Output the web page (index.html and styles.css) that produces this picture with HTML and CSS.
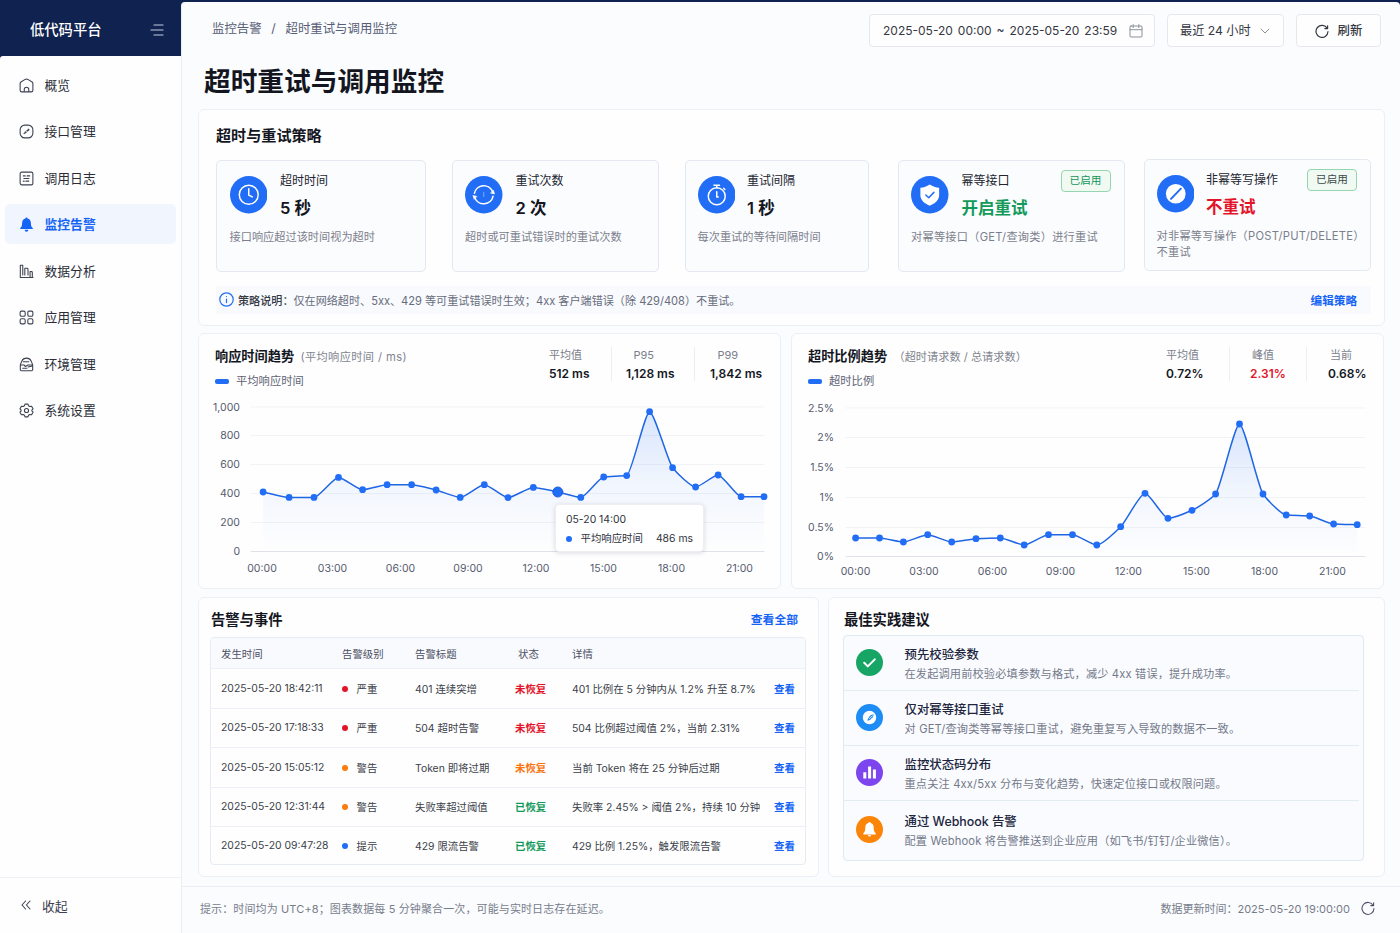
FILE: index.html
```html
<!DOCTYPE html>
<html lang="zh-CN">
<head>
    <meta charset="UTF-8">
    <title>超时重试与调用监控</title>
    <link rel="stylesheet" href="styles.css">
</head>
<body>
<aside class="sidebar">
    <div class="brand">
        <span>低代码平台</span>
        <svg class="brand-toggle" width="14" height="14" viewBox="0 0 14 14"><path d="M4 2h9M1 7h12M4 12h9"/></svg>
    </div>
    <nav class="menu">
        <a class="menu-item">
            <svg viewBox="0 0 16 16"><path d="M1.200 5.800Q1.200 4.800 2 4.300L6.600 1.500Q8 .8 9.400 1.500L14 4.300Q14.800 4.800 14.800 5.800V13a1.800 1.800 0 0 1-1.800 1.800H3A1.800 1.800 0 0 1 1.200 13zM5.600 14.800v-2.600a2.400 2.400 0 0 1 4.800 0v2.600"/></svg>
            概览
        </a>
        <a class="menu-item">
            <svg viewBox="0 0 16 16"><rect x="1.2" y="1.2" width="13.6" height="13.6" rx="5"/><path d="M5.400 10.200 7.600 8.800M10.600 5.800 8.400 7.200M8.400 7.200l1 .2M7.600 8.800l-1-.4M9.800 5.600l.8.200-.2.800"/></svg>
            接口管理
        </a>
        <a class="menu-item">
            <svg viewBox="0 0 16 16"><rect x="1.2" y="1.2" width="13.6" height="13.6" rx="1.8"/><path d="M4.600 5.200h2M8.600 5.200h2.800M5.200 8h5.400M4.600 10.800h1M7.400 10.800h3"/></svg>
            调用日志
        </a>
        <a class="menu-item active">
            <svg viewBox="0 0 16 16"><path class="solid" d="M8 .6c.7 0 1.1.5 1.1 1.1 2.3.6 3.6 2.4 3.6 4.8 0 3 .6 4.300 2 5.200v1H1.300v-1c1.400-.9 2-2.200 2-5.200 0-2.400 1.300-4.200 3.600-4.800C6.900 1.100 7.300.6 8 .6zM6 13.700h4a2 2 0 0 1-4 0z"/></svg>
            监控告警
        </a>
        <a class="menu-item">
            <svg viewBox="0 0 16 16"><path d="M4 1.400H1.400v13h13.600M4 1.400v10.400M6.200 11.800V4.600h2.400q1 0 1 1v6.200M11.800 14V8h1.400q1 0 1 1v5"/></svg>
            数据分析
        </a>
        <a class="menu-item">
            <svg viewBox="0 0 16 16"><rect x="1.200" y="1.200" width="5.400" height="5.400" rx="1.400"/><rect x="9.400" y="1.200" width="5.400" height="5.400" rx="1.400"/><rect x="1.200" y="9.400" width="5.400" height="5.400" rx="1.400"/><rect x="9.400" y="9.400" width="5.400" height="5.400" rx="1.400"/></svg>
            应用管理
        </a>
        <a class="menu-item">
            <svg viewBox="0 0 16 16"><path d="M1.400 8.400 3 4.400C4 2.200 5.800 1.200 8 1.200s4 1 5 3.200l1.600 4v5a1.200 1.200 0 0 1-1.200 1.200H2.600a1.200 1.200 0 0 1-1.200-1.200zM4.600 5h5.800M1.600 8.600h4l1.200 1.600 2.800-1.600h4.800M4 12h4.400M9.600 10.600l4.600-1"/></svg>
            环境管理
        </a>
        <a class="menu-item">
            <svg viewBox="0 0 16 16"><path d="m6.400 1.200-.5 1.700-1.500.9-1.800-.4L1 6.200l1.300 1.300v1L1 9.800l1.600 2.800 1.800-.4 1.500.9.5 1.700h3.200l.5-1.700 1.500-.9 1.800.4L15 9.800l-1.300-1.300v-1L15 6.200l-1.600-2.800-1.800.4-1.500-.9-.5-1.700z"/><circle cx="8" cy="8" r="2.200"/></svg>
            系统设置
        </a>
    </nav>
    <div class="collapse">
        <svg width="10" height="10" viewBox="0 0 10 10"><path d="M4.600 1 1 5l3.600 4M9 1 5.400 5 9 9"/></svg>
        收起
    </div>
</aside>

<main class="main">
    <header class="topbar">
        <div class="breadcrumb"><span>监控告警</span><span class="slash">/</span><span>超时重试与调用监控</span></div>
        <div class="filters">
            <div class="control range">
                <span>2025-05-20 00:00 ~ 2025-05-20 23:59</span>
                <svg width="14" height="14" viewBox="0 0 14 14"><rect x="1" y="2" width="12" height="11" rx="1"/><path d="M1 5.700h12M4.200.6v3M9.800.6v3"/></svg>
            </div>
            <div class="control period">
                <span>最近 24 小时</span>
                <svg width="10" height="6" viewBox="0 0 10 6"><path d="m1 1 4 4 4-4"/></svg>
            </div>
            <div class="control refresh">
                <svg width="14" height="14" viewBox="0 0 14 14"><path d="M12.200 4.400A6 6 0 1 0 13 7.600M12.600 1.800v2.800H9.800"/></svg>
                <span>刷新</span>
            </div>
        </div>
    </header>
    <h1>超时重试与调用监控</h1>

    <section class="card policy">
        <h2>超时与重试策略</h2>
        <div class="tiles">
            <div class="tile tile-timeout">
                <div class="tile-head">
                    <svg class="tile-icon" viewBox="0 0 38 38"><circle class="disc" cx="19" cy="19" r="19"/><circle cx="19" cy="19" r="9.600"/><path d="M19 13v6.400l3.600 1.800"/></svg>
                    <div><div class="tile-name">超时时间</div><div class="tile-value">5 秒</div></div>
                </div>
                <p>接口响应超过该时间视为超时</p>
            </div>
            <div class="tile tile-count">
                <div class="tile-head">
                    <svg class="tile-icon" viewBox="0 0 38 38"><circle class="disc" cx="19" cy="19" r="19"/><path d="M9.600 17.500a9.600 9.600 0 0 1 18.400-1.500M28.400 20.500A9.600 9.600 0 0 1 10 22"/><path class="arrow" d="m26.200 17.400 3.800.8-1.200-3.600zM11.800 20.600l-3.800-.8 1.200 3.600z"/><path class="faint" d="M19 16.500v4.500"/></svg>
                    <div><div class="tile-name">重试次数</div><div class="tile-value">2 次</div></div>
                </div>
                <p>超时或可重试错误时的重试次数</p>
            </div>
            <div class="tile tile-interval">
                <div class="tile-head">
                    <svg class="tile-icon" viewBox="0 0 38 38"><circle class="disc" cx="19" cy="19" r="19"/><circle cx="19" cy="20.500" r="8.600"/><path d="M19 16v5.200h1.500M16.200 9.300h5.600M19 9.300v2.500M26 12.400l1.200 1.200"/></svg>
                    <div><div class="tile-name">重试间隔</div><div class="tile-value">1 秒</div></div>
                </div>
                <p>每次重试的等待间隔时间</p>
            </div>
            <div class="tile tile-safe">
                <div class="tile-head">
                    <svg class="tile-icon" viewBox="0 0 38 38"><circle class="disc" cx="19" cy="19" r="19"/><path class="white" d="M19 8.500c3 2 6 3 9.500 3.300v7.700c0 4.800-4 8.300-9.500 10.700-5.500-2.400-9.500-5.900-9.500-10.700v-7.700C13 11.500 16 10.500 19 8.500z"/><path class="blue-line" d="m15 19.200 3 2.800 5.200-5.400"/></svg>
                    <div><div class="tile-name">幂等接口</div><div class="tile-value green">开启重试</div></div>
                    <span class="tag tag-green">已启用</span>
                </div>
                <p>对幂等接口（GET/查询类）进行重试</p>
            </div>
            <div class="tile tile-unsafe">
                <div class="tile-head">
                    <svg class="tile-icon" viewBox="0 0 38 38"><circle class="disc" cx="19" cy="19" r="19"/><circle class="white" cx="19" cy="19" r="10"/><path class="blue-line slash-line" d="m14.200 24.200 10-10.400"/></svg>
                    <div><div class="tile-name">非幂等写操作</div><div class="tile-value red">不重试</div></div>
                    <span class="tag">已启用</span>
                </div>
                <p>对非幂等写操作（POST/PUT/DELETE）不重试</p>
            </div>
        </div>
        <div class="note">
            <svg width="15" height="15" viewBox="0 0 15 15"><circle cx="7.500" cy="7.500" r="6.700"/><path d="M7.500 7v3.600M7.500 4.500v.1"/></svg>
            <b>策略说明：</b>
            <span>仅在网络超时、5xx、429 等可重试错误时生效；4xx 客户端错误（除 429/408）不重试。</span>
            <a class="link">编辑策略</a>
        </div>
    </section>

    <div class="charts">
        <section class="card chart-card">
            <div class="chart-head">
                <div>
                    <h3>响应时间趋势 <small class="wide">(平均响应时间 / ms)</small></h3>
                    <div class="legend">平均响应时间</div>
                </div>
                <div class="stats stats-ms">
                    <div class="stat first"><span>平均值</span><b>512 ms</b></div>
                    <div class="stat"><span>P95</span><b>1,128 ms</b></div>
                    <div class="stat last"><span>P99</span><b>1,842 ms</b></div>
                </div>
            </div>
            <svg class="chart" id="latencyChart" width="582" height="194" viewBox="199 394 582 194"></svg>
            <div class="tooltip">
                <div>05-20 14:00</div>
                <div class="tooltip-row"><i class="dot blue"></i><span>平均响应时间</span><span class="tooltip-value">486 ms</span></div>
            </div>
        </section>
        <section class="card chart-card">
            <div class="chart-head">
                <div>
                    <h3>超时比例趋势 <small>（超时请求数 / 总请求数）</small></h3>
                    <div class="legend">超时比例</div>
                </div>
                <div class="stats stats-rate">
                    <div class="stat first"><span>平均值</span><b>0.72%</b></div>
                    <div class="stat"><span>峰值</span><b class="red">2.31%</b></div>
                    <div class="stat last"><span>当前</span><b>0.68%</b></div>
                </div>
            </div>
            <svg class="chart" id="timeoutChart" width="591" height="194" viewBox="792 394 591 194"></svg>
        </section>
    </div>

    <div class="bottom">
        <section class="card events">
            <div class="events-head"><h2>告警与事件</h2><a class="link">查看全部</a></div>
            <div class="table">
                <div class="row head"><span>发生时间</span><span>告警级别</span><span>告警标题</span><span class="state">状态</span><span>详情</span><span></span></div>
                <div class="row"><span>2025-05-20 18:42:11</span><span><i class="dot crit"></i>严重</span><span>401 连续突增</span><b class="red">未恢复</b><span>401 比例在 5 分钟内从 1.2% 升至 8.7%</span><a class="link">查看</a></div>
                <div class="row"><span>2025-05-20 17:18:33</span><span><i class="dot crit"></i>严重</span><span>504 超时告警</span><b class="red">未恢复</b><span>504 比例超过阈值 2%，当前 2.31%</span><a class="link">查看</a></div>
                <div class="row"><span>2025-05-20 15:05:12</span><span><i class="dot warn"></i>警告</span><span>Token 即将过期</span><b class="orange">未恢复</b><span>当前 Token 将在 25 分钟后过期</span><a class="link">查看</a></div>
                <div class="row"><span>2025-05-20 12:31:44</span><span><i class="dot warn"></i>警告</span><span>失败率超过阈值</span><b class="green">已恢复</b><span>失败率 2.45% &gt; 阈值 2%，持续 10 分钟</span><a class="link">查看</a></div>
                <div class="row"><span>2025-05-20 09:47:28</span><span><i class="dot blue"></i>提示</span><span>429 限流告警</span><b class="green">已恢复</b><span>429 比例 1.25%，触发限流告警</span><a class="link">查看</a></div>
            </div>
        </section>
        <section class="card tips">
            <h2>最佳实践建议</h2>
            <div class="tip-list">
                <div class="tip">
                    <svg viewBox="0 0 27 27"><circle cx="13.500" cy="13.500" r="13.500" fill="#17a566"/><path class="white-line" d="m8.200 13.800 3.600 3.600 7-7"/></svg>
                    <div><b>预先校验参数</b><p>在发起调用前校验必填参数与格式，减少 4xx 错误，提升成功率。</p></div>
                </div>
                <div class="tip">
                    <svg viewBox="0 0 27 27"><circle cx="13.500" cy="13.500" r="13.500" fill="#1d8cf5"/><circle cx="13.500" cy="13.500" r="6.700" fill="#fff"/><path d="M17.600 10.200c-3 .2-5 2.400-6.400 6.200 2 .4 3.200-.2 3.800-1.600 1.700-.8 2.600-2.400 2.600-4.600z" fill="#1d8cf5"/><path d="m13.400 14.600 3-2.800" stroke="#fff" stroke-width=".8"/></svg>
                    <div><b>仅对幂等接口重试</b><p>对 GET/查询类等幂等接口重试，避免重复写入导致的数据不一致。</p></div>
                </div>
                <div class="tip">
                    <svg viewBox="0 0 27 27"><circle cx="13.500" cy="13.500" r="13.500" fill="#7c45ed"/><path d="M7.300 13.200h3v6.300h-3zM12.100 7.500h3v12h-3zM16.900 10.500h3v9h-3z" fill="#fff"/></svg>
                    <div><b>监控状态码分布</b><p>重点关注 4xx/5xx 分布与变化趋势，快速定位接口或权限问题。</p></div>
                </div>
                <div class="tip">
                    <svg viewBox="0 0 27 27"><circle cx="13.500" cy="13.500" r="13.500" fill="#fb8508"/><path d="M13.500 6c.6 0 1 .4 1 1 2.100.5 3.200 2.100 3.200 4.300 0 3.400.5 4.900 2 6v1.200H7.300v-1.200c1.500-1.100 2-2.600 2-6 0-2.200 1.100-3.800 3.200-4.300 0-.6.4-1 1-1zM11.900 19h3.200a1.600 1.600 0 0 1-3.200 0z" fill="#fff"/></svg>
                    <div><b>通过 Webhook 告警</b><p>配置 Webhook 将告警推送到企业应用（如飞书/钉钉/企业微信）。</p></div>
                </div>
            </div>
        </section>
    </div>

    <footer class="footer">
        <span class="hint">提示：时间均为 UTC+8；图表数据每 5 分钟聚合一次，可能与实时日志存在延迟。</span>
        <span class="updated">数据更新时间：2025-05-20 19:00:00
            <svg width="14" height="14" viewBox="0 0 14 14"><path d="M12.200 4.400A6 6 0 1 0 13 7.600M12.600 1.800v2.800H9.800"/></svg>
        </span>
    </footer>
</main>
<script src="charts.js"></script>
</body>
</html>
```
FILE: styles.css
```css
* {
    box-sizing: border-box;
}

body {
    margin: 0;
    width: 1400px;
    height: 933px;
    display: flex;
    overflow: hidden;
    background: #10224f;
    color: #14161f;
    font-family: Inter, "Noto Sans CJK SC", sans-serif;
    font-size: 11px;
    white-space: nowrap;
}

h1, h2, h3, p {
    margin: 0;
}

svg {
    fill: none;
    stroke-linecap: round;
    stroke-linejoin: round;
    flex: none;
}

/* sidebar */
.sidebar {
    width: 181px;
    display: flex;
    flex-direction: column;
}

.brand {
    height: 56px;
    padding: 1px 17px 0 30px;
    display: flex;
    align-items: center;
    justify-content: space-between;
    color: #fff;
    font-size: 14.3px;
    font-weight: 500;
}

.brand-toggle {
    margin-top: 2px;
    stroke: #c3cbe0;
    stroke-width: 1.2;
}

.menu {
    flex: 1;
    padding: 8px 5px 0;
    display: flex;
    flex-direction: column;
    gap: 6.5px;
    background: #fefefe;
    border-radius: 3px 0 0 0;
}

.menu-item {
    height: 40px;
    padding-left: 14px;
    display: flex;
    align-items: center;
    gap: 10.5px;
    border-radius: 5px;
    color: #2a2d38;
    font-size: 12.8px;
}

.menu-item svg {
    width: 15px;
    height: 15px;
    margin-top: 2px;
    stroke: #3d4152;
    stroke-width: 1.15;
}

.menu-item.active {
    background: #f1f6fe;
    color: #1664f5;
    font-weight: 600;
}

.menu-item .solid {
    fill: #1664f5;
    stroke: none;
}

.collapse {
    height: 56px;
    padding: 0 0 1px 21px;
    display: flex;
    align-items: center;
    gap: 11px;
    background: #fefefe;
    border-top: 1px solid #eef0f5;
    color: #3d4152;
    font-size: 12.8px;
}

.collapse svg {
    stroke: #3d4152;
    stroke-width: 1.1;
}

/* page */
.main {
    flex: 1;
    margin-top: 2px;
    display: flex;
    flex-direction: column;
    background: #fbfcfe;
    border-left: 1px solid #e9edf5;
    border-radius: 4px 4px 0 0;
}

.topbar {
    height: 44px;
    padding: 12px 19px 0 30px;
    display: flex;
    justify-content: space-between;
}

.breadcrumb {
    height: 28px;
    display: flex;
    align-items: center;
    color: #565d75;
    font-size: 12.4px;
}

.slash {
    width: 24px;
    text-align: center;
}

.filters {
    display: flex;
    gap: 12px;
}

.control {
    height: 33px;
    display: flex;
    align-items: center;
    border: 1px solid #e6e8ee;
    border-radius: 4px;
    background: #fefefe;
    color: #353843;
    font-size: 12.2px;
}

.control svg {
    stroke: #8d909b;
    stroke-width: 1;
}

.range {
    width: 286px;
    padding: 0 11px 0 13px;
    justify-content: space-between;
    font-size: 12px;
    word-spacing: 1.6px;
}

.period {
    width: 117px;
    padding: 0 13px 0 12px;
    justify-content: space-between;
}

.period span {
    padding-bottom: 1px;
}

.refresh {
    width: 85px;
    justify-content: center;
    gap: 9px;
    font-size: 12.4px;
    font-weight: 500;
}

.refresh span {
    padding-bottom: 1px;
}

.refresh svg {
    stroke: #353843;
    stroke-width: 1.2;
}

h1 {
    height: 63px;
    padding: 12px 0 0 22px;
    font-size: 26.7px;
    font-weight: 600;
    line-height: 46px;
}

h2 {
    font-size: 15.1px;
    font-weight: 600;
    line-height: 20px;
}

.card {
    background: #fefefe;
    border: 1px solid #ebeff6;
    border-radius: 6px;
}

.link {
    color: #1664f5;
    font-weight: 600;
}

.red {
    color: #e3142a;
}

.green {
    color: #139a5b;
}

.orange {
    color: #f9740f;
}

/* retry policy */
.policy {
    height: 217px;
    margin: 0 15px 0 16px;
    padding: 16px 13px 0 17px;
}

.tiles {
    height: 112px;
    margin-top: 14px;
    display: flex;
}

.tile {
    height: 112px;
    padding: 10px 0 0 12.500px;
    border: 1px solid #e3e8f1;
    border-radius: 5px;
    background: #fbfcfe;
    flex: none;
}

.tile-timeout {
    width: 210px;
}

.tile-count {
    width: 207.500px;
    margin-left: 25.500px;
}

.tile-interval {
    width: 184px;
    margin-left: 25.500px;
    padding-left: 12px;
}

.tile-safe {
    width: 227px;
    margin-left: 29px;
}

.tile-unsafe {
    width: 227px;
    margin-left: 19.500px;
    padding-left: 11.500px;
    margin-top: -1px;
}

.tile-head {
    height: 55px;
    display: flex;
    gap: 13px;
}

.tile-interval .tile-head,
.tile-unsafe .tile-head {
    gap: 12px;
}

.tile-icon {
    width: 37.500px;
    height: 37.500px;
    margin-top: 5px;
    stroke: #fff;
    stroke-width: 1.5;
}

.tile-icon .disc {
    fill: #216df6;
    stroke: none;
}

.tile-icon .white {
    fill: #fff;
    stroke: none;
}

.tile-icon .arrow {
    fill: #fff;
    stroke-width: .6;
}

.tile-icon .blue-line {
    stroke: #216df6;
}

.tile-icon .slash-line {
    stroke-width: 2;
}

.tile-icon .faint {
    stroke: #7fa9fa;
    stroke-width: 1;
}

.tile-name {
    font-size: 12px;
    line-height: 20px;
    color: #22252f;
}

.tile-value {
    font-size: 16.500px;
    font-weight: 600;
    line-height: 24px;
    margin-top: 5px;
}

.tile p {
    padding-top: 3px;
    font-size: 11.2px;
    line-height: 16px;
    color: #7b7f8c;
    white-space: normal;
}

.tile-safe p,
.tile-unsafe p {
    letter-spacing: .25px;
}

.tag {
    width: 50px;
    height: 22px;
    margin: -1px 13px 0 auto;
    border: 1px solid #95d6ae;
    border-radius: 4px;
    background: #f0faf3;
    color: #3b4a46;
    font-size: 10.600px;
    line-height: 20px;
    text-align: center;
}

.tag-green {
    color: #13965a;
}

.note {
    height: 28px;
    margin-top: 14px;
    padding: 0 14px 0 3px;
    display: flex;
    align-items: center;
    background: #f8fafd;
    color: #676c7c;
    font-size: 11.100px;
}

.note svg {
    margin: 0 4px 1px 0;
    stroke: #216df6;
    stroke-width: 1.2;
}

.note b {
    color: #353843;
    font-weight: 500;
}

.note .link {
    margin-left: auto;
    font-size: 11.600px;
}

/* charts */
.charts {
    height: 256px;
    margin: 7px 15px 0 16px;
    display: flex;
    gap: 10px;
}

.chart-card {
    position: relative;
    width: 583px;
    padding: 12px 0 0 16px;
}

.chart-card + .chart-card {
    width: 593px;
}

.chart-head {
    height: 48px;
    display: flex;
    justify-content: space-between;
}

h3 {
    font-size: 13.200px;
    font-weight: 600;
    line-height: 20px;
}

h3 small {
    margin-left: 3px;
    color: #80848f;
    font-size: 11.200px;
    font-weight: 400;
}

h3 .wide {
    letter-spacing: .400px;
}

.legend {
    margin-top: 4px;
    display: flex;
    align-items: center;
    gap: 7px;
    color: #5f6473;
    font-size: 11.300px;
    line-height: 20px;
}

.legend::before {
    content: "";
    width: 14px;
    height: 5px;
    border-radius: 2px;
    background: #216df6;
}

.stats {
    display: flex;
    height: 34px;
    margin-top: 1px;
}

.stat {
    border-left: 1px solid #eceef3;
    line-height: 17px;
}

.stat span {
    display: block;
    color: #7b7f8c;
}

.stat b {
    display: block;
    margin-top: 1px;
    font-size: 12px;
    font-weight: 600;
}

.stat.first {
    border: 0;
}

.stats-ms .stat {
    width: 83px;
    padding-left: 14px;
}

.stats-ms .stat span {
    padding-left: 7.500px;
}

.stats-ms .stat.first {
    padding-left: 21px;
}

.stats-ms .stat.last {
    width: 86px;
    padding-left: 15px;
}

.stats-rate .stat {
    padding-left: 20px;
    width: 77px;
}

.stats-rate .stat span {
    padding-left: 2px;
}

.stats-rate .stat.first {
    padding-left: 14px;
}

.stats-rate .stat.last {
    padding-left: 21px;
}

.stats .stat.first span {
    padding-left: 0;
}

.chart {
    display: block;
    margin-left: -16px;
}

.chart text {
    fill: #555b6e;
    font-size: 10.500px;
}

.chart .grid {
    stroke: #f1f3f6;
}

.chart .base {
    stroke: #dfe2e8;
}

.chart .line {
    stroke: #1f66e5;
    stroke-width: 1.500;
}

.chart .point {
    fill: #216df6;
}

.chart .halo {
    stroke: #1f5fd8;
    stroke-width: 1;
}

.tooltip {
    position: absolute;
    left: 356px;
    top: 170px;
    width: 149px;
    height: 48px;
    padding: 5px 10px;
    border: 1px solid #eceef2;
    border-radius: 4px;
    background: #fff;
    box-shadow: 0 1px 5px rgba(30, 45, 80, .16);
    font-size: 10.400px;
    line-height: 19px;
    color: #30333d;
}

.tooltip-row {
    display: flex;
    align-items: center;
}

.dot {
    display: inline-block;
    width: 6px;
    height: 6px;
    margin-right: 8.500px;
    border-radius: 50%;
    vertical-align: 1px;
}

.tooltip-value {
    margin-left: auto;
}

.dot.blue {
    background: #216df6;
}

.dot.crit {
    background: #e3142a;
}

.dot.warn {
    background: #fb7b0c;
}

/* events and tips */
.bottom {
    height: 280px;
    margin: 8px 15px 0 16px;
    display: flex;
    gap: 9px;
}

.bottom h2 {
    padding-top: 1px;
    font-size: 14.300px;
}

.events {
    width: 621px;
    padding: 11px 12px 0 11px;
}

.events-head {
    height: 22px;
    display: flex;
    justify-content: space-between;
    padding: 0 8px 0 1px;
    line-height: 23px;
    font-size: 11.800px;
}

.table {
    height: 228px;
    margin-top: 6px;
    border: 1px solid #e6eaf2;
    border-radius: 4px;
    overflow: hidden;
}

.row {
    height: 39.500px;
    padding-left: 10px;
    display: grid;
    grid-template-columns: 121px 73px 100px 57px 202px 30px;
    align-items: center;
    border-bottom: 1px solid #eceff5;
    color: #3b3e4a;
    font-size: 10.400px;
}

.row.head {
    height: 31px;
    background: #f9fafd;
    color: #4b5064;
}

.row:last-child {
    border: 0;
    height: 37px;
}

.row b {
    font-weight: 600;
}

.state {
    padding-left: 3px;
}

.tips {
    width: 557px;
    padding: 11px 20px 0 14px;
}

.tips h2 {
    height: 20px;
    padding-left: 1px;
}

.tip-list {
    height: 226px;
    margin-top: 6px;
    border: 1px solid #e0e8f2;
    border-radius: 4px;
    background: #f9fbfe;
}

.tip {
    height: 55px;
    padding: 0 0 0 11.500px;
    margin-right: 4px;
    display: flex;
    align-items: center;
    gap: 22px;
    border-bottom: 1px solid #e3ebf3;
}

.tip:last-child {
    height: 58px;
    border: 0;
}

.tip svg {
    width: 27px;
    height: 27px;
    margin-bottom: 2px;
}

.tip div {
    margin-top: 2px;
}

.tip b {
    display: block;
    color: #20243d;
    font-size: 12.400px;
    font-weight: 500;
    line-height: 19px;
}

.tip p {
    color: #74798a;
    font-size: 11.200px;
    line-height: 20px;
    letter-spacing: .150px;
}

.white-line {
    stroke: #fff;
    stroke-width: 2;
}

.footer {
    flex: 1;
    margin-top: 9px;
    padding: 0 25px 5px 18px;
    display: flex;
    align-items: center;
    justify-content: space-between;
    border-top: 1px solid #e9edf4;
    color: #777c8b;
    font-size: 11px;
}

.hint {
    letter-spacing: .120px;
}

.updated {
    display: flex;
    align-items: center;
    gap: 11px;
}

.updated svg {
    stroke: #4b5064;
    stroke-width: 1.1;
}
```
FILE: charts.js
```js
const LATENCY = {
    id: 'latencyChart',
    left: 251, right: 764, labelX: 240, timeY: 572,
    times: [262, 332.5, 400.5, 468, 536, 603.5, 671.5, 739.5],
    ticks: [['1,000', 407], ['800', 435.5], ['600', 464.5], ['400', 493.5], ['200', 522.5], ['0', 551.5]],
    active: 12,
    points: [[263.1, 492], [289.1, 497.4], [314, 497.4], [338.5, 477.4], [362.6, 489.7], [387.1, 484.7],
        [411.6, 484.7], [436.1, 490], [460.2, 497.4], [484.3, 484.7], [508, 497.6], [533.3, 487.4],
        [557.8, 492], [580.8, 497.4], [603.7, 477], [626.7, 475.6], [649.6, 411.7], [672.6, 467.7],
        [695.6, 487], [718.1, 475], [741.1, 496.7], [764, 496.7]]
};

const TIMEOUT = {
    id: 'timeoutChart',
    left: 846, right: 1365, labelX: 834, timeY: 575,
    times: [855.5, 924, 992.5, 1060.5, 1128.5, 1196.5, 1264.5, 1332.5],
    ticks: [['2.5%', 408], ['2%', 437.5], ['1.5%', 467.5], ['1%', 497.5], ['0.5%', 527.5], ['0%', 556.5]],
    active: -1,
    points: [[855.6, 538], [879.5, 538], [903.4, 542], [927.7, 534.7], [951.7, 542], [976, 538.7],
        [1000.3, 538], [1024.2, 545], [1048.5, 534.7], [1072.5, 534.7], [1096.8, 545], [1120.7, 526.7],
        [1145, 493.3], [1168, 518.3], [1192, 510.3], [1215.6, 494], [1239.5, 424], [1263, 494],
        [1286.2, 515], [1309.7, 516], [1333.6, 524], [1357.2, 524.7]]
};

// smooth line without overshoot: flat tangents at every peak and valley
function smoothPath(points) {
    const slope = (a, b) => (b[1] - a[1]) / (b[0] - a[0]);
    const tangents = points.map((p, i) => {
        if (i === 0) return slope(p, points[1]);
        if (i === points.length - 1) return slope(points[i - 1], p);
        const before = slope(points[i - 1], p);
        const after = slope(p, points[i + 1]);
        return before * after <= 0 ? 0 : 2 * before * after / (before + after);
    });
    let path = 'M' + points[0];
    for (let i = 1; i < points.length; i++) {
        const a = points[i - 1];
        const b = points[i];
        const step = (b[0] - a[0]) * 0.2;
        path += `C${a[0] + step},${a[1] + step * tangents[i - 1]} ${b[0] - step},${b[1] - step * tangents[i]} ${b}`;
    }
    return path;
}

function drawChart(chart) {
    const line = smoothPath(chart.points);
    const bottom = chart.ticks[chart.ticks.length - 1][1];
    const first = chart.points[0];
    const last = chart.points[chart.points.length - 1];
    let html = `<defs><linearGradient id="${chart.id}Fill" x1="0" y1="0" x2="0" y2="1">
        <stop offset="0" stop-color="#216df6" stop-opacity=".17"/>
        <stop offset=".5" stop-color="#216df6" stop-opacity=".06"/>
        <stop offset="1" stop-color="#216df6" stop-opacity="0"/></linearGradient></defs>`;
    chart.ticks.forEach(([label, y]) => {
        html += `<path class="${y === bottom ? 'base' : 'grid'}" d="M${chart.left} ${y}H${chart.right}"/>`;
        html += `<text x="${chart.labelX}" y="${y + 3.5}" text-anchor="end">${label}</text>`;
    });
    chart.times.forEach((x, i) => {
        html += `<text x="${x}" y="${chart.timeY}" text-anchor="middle">${String(i * 3).padStart(2, '0')}:00</text>`;
    });
    html += `<path fill="url(#${chart.id}Fill)" d="${line}L${last[0]},${bottom}L${first[0]},${bottom}Z"/>`;
    html += `<path class="line" d="${line}"/>`;
    chart.points.forEach(([x, y], i) => {
        html += `<circle class="point${i === chart.active ? ' halo' : ''}" cx="${x}" cy="${y}" r="${i === chart.active ? 5 : 3.4}"/>`;
    });
    document.getElementById(chart.id).innerHTML = html;
}

drawChart(LATENCY);
drawChart(TIMEOUT);
```
